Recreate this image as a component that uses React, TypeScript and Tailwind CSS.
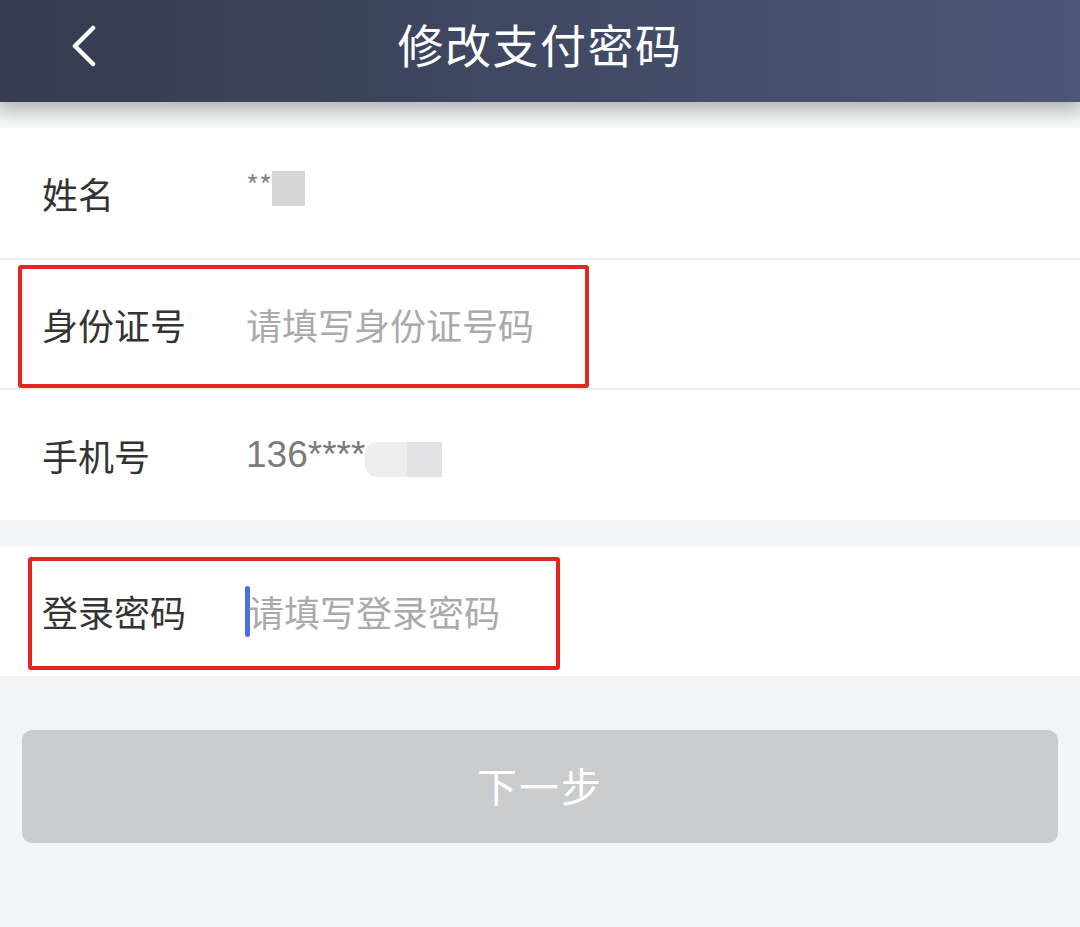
import React from "react";

const font = { fontFamily: '"Noto Sans CJK SC", "Noto Sans", sans-serif' };

export default function App() {
  return (
    <div className="w-[1080px] h-[927px] bg-[#f2f4f5] overflow-hidden" style={font}>
      <div className="relative z-10 h-[102px] bg-gradient-to-r from-[#353b50] to-[#4c5777] flex items-center justify-center shadow-[0_8px_16px_rgba(0,0,0,0.22)]">
        <svg className="absolute left-[70px] top-[25px]" width="28" height="42" viewBox="0 0 28 42">
          <path d="M23 3 L5 21 L23 39" fill="none" stroke="white" strokeWidth="4.5" strokeLinecap="round" strokeLinejoin="round" />
        </svg>
        <span className="text-white text-[46px] leading-none tracking-[1.5px] mt-[-16px]">修改支付密码</span>
      </div>
      <div className="h-[26px] bg-gradient-to-b from-[#e6e7e8] to-[#f6f7f7]" />
      <div className="bg-white">
        <div className="h-[132px] flex items-center border-b-2 border-[#efefef]">
          <span className="ml-[42px] w-[204px] text-[36px] text-[#333]">姓名</span>
          <span className="text-[28px] text-[#888] mt-[-18px]">**</span>
          <span className="w-[33px] h-[35px] bg-[#d6d6d6] mt-[-10px]" />
        </div>
        <div className="h-[130px] flex items-center border-b-2 border-[#efefef] relative">
          <div className="absolute left-[18px] top-[5px] w-[571px] h-[123px] border-[4px] border-[#e3261f] rounded-[3px]" />
          <span className="ml-[42px] w-[204px] text-[36px] text-[#333]">身份证号</span>
          <span className="text-[36px] text-[#aaa]">请填写身份证号码</span>
        </div>
        <div className="h-[130px] flex items-center">
          <span className="ml-[42px] w-[204px] text-[36px] text-[#333]">手机号</span>
          <span className="text-[37px] text-[#7b7b7b]" style={{ fontFamily: '"Liberation Sans", Arial, sans-serif' }}>136****</span>
          <span className="w-[42px] h-[35px] bg-[#ededed] mt-[8px] rounded-l-[12px]" />
          <span className="w-[35px] h-[35px] bg-[#e3e3e5] mt-[8px]" />
        </div>
      </div>
      <div className="h-[26px]" />
      <div className="bg-white h-[130px] flex items-center relative">
        <div className="absolute left-[28px] top-[11px] w-[532px] h-[113px] border-[4px] border-[#e3261f] rounded-[3px]" />
        <span className="ml-[42px] w-[203px] text-[36px] text-[#333]">登录密码</span>
        <span className="w-[5px] h-[51px] bg-[#4a6fe0] rounded-full" />
        <span className="text-[36px] text-[#aaa] ml-[-2px]">请填写登录密码</span>
      </div>
      <div className="px-[22px] pt-[54px]">
        <div className="h-[113px] rounded-[10px] bg-[#cbcccd] flex items-center justify-center">
          <span className="text-white text-[40px] tracking-[2px] leading-none mt-[-4px]">下一步</span>
        </div>
      </div>
    </div>
  );
}
